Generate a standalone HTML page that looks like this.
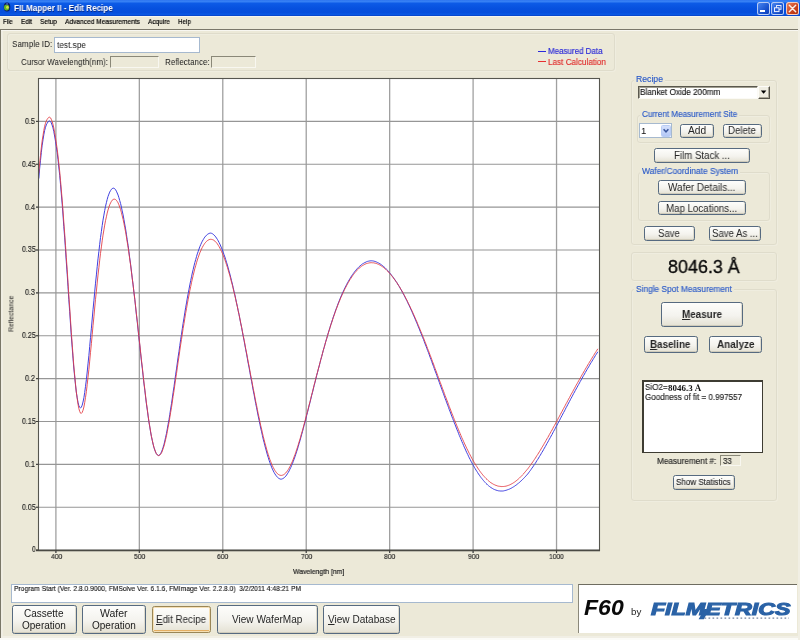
<!DOCTYPE html>
<html><head><meta charset="utf-8"><title>FILMapper II - Edit Recipe</title>
<style>
html,body{margin:0;padding:0;}
html{background:#ece9d8;}
body{filter:blur(0.32px);width:800px;height:640px;overflow:hidden;position:relative;background:#ece9d8;font-family:"Liberation Sans",sans-serif;}
.t{position:absolute;will-change:transform;white-space:nowrap;transform-origin:0 50%;}
.gb{border:1px solid #dfdccb;border-radius:3px;box-sizing:border-box;box-shadow:inset 1px 1px 0 rgba(255,255,255,.18), 1px 1px 0 rgba(255,255,255,.18);}
.btn{box-sizing:border-box;border:1px solid #566a80;border-radius:2.5px;background:linear-gradient(#fdfdfb 0%,#f4f3ee 55%,#e4e1d3 100%);box-shadow:inset 0 -1px 0 #cfcbbb, inset -1px 0 0 #dedbce;}
.tb{box-sizing:border-box;border:1px solid #a6b9cf;background:#fff;}
.sunk{box-sizing:border-box;border:1px solid;border-color:#8a8878 #f8f7f0 #f8f7f0 #8a8878;}
svg{position:absolute;left:0;top:0;}
</style></head><body>
<div class="" style="position:absolute;left:0px;top:0px;width:800px;height:15.6px;background:linear-gradient(#2a72ee 0%,#3a84f6 8%,#0c5ae6 22%,#0650de 55%,#064edc 78%,#0a58e4 90%,#0640c4 100%);"></div>
<div class="" style="position:absolute;left:0px;top:15.6px;width:800px;height:1.4000000000000004px;background:#f6f5ee;"></div>
<svg width="16" height="16" viewBox="0 0 16 16"><ellipse cx="7" cy="7" rx="3.3" ry="4.6" fill="#0c1c64"/><ellipse cx="6.6" cy="7.4" rx="2.6" ry="3.0" fill="#62b42c"/><ellipse cx="7.4" cy="7.3" rx="1.3" ry="1.5" fill="#d6e244"/><ellipse cx="7.1" cy="3.9" rx="1.1" ry="0.9" fill="#3a58c0"/></svg>
<div class="t" style='left:13.80px;top:3.70px;font:bold 8.5px/8.5px "Liberation Sans", sans-serif;color:#fff;transform:scaleX(0.9499);text-shadow:0.5px 0.5px 0 #0a2a80;'>FILMapper II - Edit Recipe</div>
<div class="" style="position:absolute;left:757px;top:2px;width:13px;height:12.6px;background:linear-gradient(135deg,#4a86f0,#1a54d0 60%,#0a3cb8);border:1px solid rgba(225,236,255,.78);border-radius:2.5px;box-sizing:border-box;"></div>
<div class="" style="position:absolute;left:771px;top:2px;width:13px;height:12.6px;background:linear-gradient(135deg,#4a86f0,#1a54d0 60%,#0a3cb8);border:1px solid rgba(225,236,255,.78);border-radius:2.5px;box-sizing:border-box;"></div>
<div class="" style="position:absolute;left:786px;top:2px;width:13px;height:12.6px;background:linear-gradient(135deg,#e8805c,#c8401c 60%,#b03010);border:1px solid rgba(255,236,228,.8);border-radius:2.5px;box-sizing:border-box;"></div>
<svg width="800" height="16" viewBox="0 0 800 16"><rect x="760" y="10" width="5" height="2" fill="#fff"/><rect x="776.5" y="5.5" width="4.5" height="3.8" fill="none" stroke="#dfe9ff" stroke-width="1"/><rect x="774.5" y="7.8" width="4.5" height="3.8" fill="#2a5fd6" stroke="#eef3ff" stroke-width="1"/><path d="M789.3 5.3 L795.7 11.7 M795.7 5.3 L789.3 11.7" stroke="#fbeee8" stroke-width="1.45" stroke-linecap="round"/></svg>
<div class="t" style='left:3.30px;top:17.88px;font:7.7px/7.7px "Liberation Sans", sans-serif;color:#000;transform:scaleX(0.7898);-webkit-text-stroke:0.2px #000;'>File</div>
<div class="t" style='left:20.75px;top:17.88px;font:7.7px/7.7px "Liberation Sans", sans-serif;color:#000;transform:scaleX(0.8290);-webkit-text-stroke:0.2px #000;'>Edit</div>
<div class="t" style='left:40.00px;top:17.88px;font:7.7px/7.7px "Liberation Sans", sans-serif;color:#000;transform:scaleX(0.8448);-webkit-text-stroke:0.2px #000;'>Setup</div>
<div class="t" style='left:65.00px;top:17.88px;font:7.7px/7.7px "Liberation Sans", sans-serif;color:#000;transform:scaleX(0.8590);-webkit-text-stroke:0.2px #000;'>Advanced Measurements</div>
<div class="t" style='left:148.00px;top:17.88px;font:7.7px/7.7px "Liberation Sans", sans-serif;color:#000;transform:scaleX(0.8426);-webkit-text-stroke:0.2px #000;'>Acquire</div>
<div class="t" style='left:178.00px;top:17.88px;font:7.7px/7.7px "Liberation Sans", sans-serif;color:#000;transform:scaleX(0.8209);-webkit-text-stroke:0.2px #000;'>Help</div>
<div class="" style="position:absolute;left:0px;top:29px;width:799px;height:1px;background:#7a776a;"></div>
<div class="" style="position:absolute;left:0px;top:30px;width:799px;height:1px;background:#f8f7f1;"></div>
<div class="" style="position:absolute;left:0px;top:29px;width:1.4px;height:609.2px;background:linear-gradient(90deg,#6a6758,#8a8776);"></div>
<div class="" style="position:absolute;left:1.4px;top:31px;width:1.6px;height:605px;background:#f0eee3;"></div>
<div class="gb" style="position:absolute;left:7px;top:33px;width:608px;height:38px;"></div>
<div class="t" style='left:12.00px;top:39.09px;font:9.7px/9.7px "Liberation Sans", sans-serif;color:#1a1a1a;transform:scaleX(0.8399);'>Sample ID:</div>
<div class="tb" style="position:absolute;left:54px;top:37px;width:146px;height:16px;"></div>
<div class="t" style='left:56.50px;top:39.59px;font:9.7px/9.7px "Liberation Sans", sans-serif;color:#1a1a1a;transform:scaleX(0.8537);'>test.spe</div>
<div class="t" style='left:21.00px;top:56.99px;font:9.7px/9.7px "Liberation Sans", sans-serif;color:#1a1a1a;transform:scaleX(0.8262);'>Cursor Wavelength(nm):</div>
<div class="sunk" style="position:absolute;left:110px;top:56px;width:49px;height:12px;"></div>
<div class="t" style='left:164.50px;top:56.99px;font:9.7px/9.7px "Liberation Sans", sans-serif;color:#1a1a1a;transform:scaleX(0.8309);'>Reflectance:</div>
<div class="sunk" style="position:absolute;left:211px;top:56px;width:45px;height:12px;"></div>
<div class="" style="position:absolute;left:537.5px;top:51px;width:8.5px;height:1px;background:#2a2adc;"></div>
<div class="t" style='left:548.20px;top:47.12px;font:8.6px/8.6px "Liberation Sans", sans-serif;color:#2424d8;transform:scaleX(0.9286);-webkit-text-stroke:0.14px #2424d8;'>Measured Data</div>
<div class="" style="position:absolute;left:537.5px;top:61px;width:8.5px;height:1px;background:#e83030;"></div>
<div class="t" style='left:548.20px;top:57.52px;font:8.6px/8.6px "Liberation Sans", sans-serif;color:#e02a2a;transform:scaleX(0.9478);-webkit-text-stroke:0.14px #e02a2a;'>Last Calculation</div>
<svg width="800" height="640" viewBox="0 0 800 640"><rect x="38.5" y="78.5" width="561.0" height="472.0" fill="#fff"/><line x1="55.9" y1="78.5" x2="55.9" y2="553.0" stroke="#a0a0a0" stroke-width="1.3"/><line x1="139.34" y1="78.5" x2="139.34" y2="553.0" stroke="#a0a0a0" stroke-width="1.3"/><line x1="222.78" y1="78.5" x2="222.78" y2="553.0" stroke="#a0a0a0" stroke-width="1.3"/><line x1="306.22" y1="78.5" x2="306.22" y2="553.0" stroke="#a0a0a0" stroke-width="1.3"/><line x1="389.66" y1="78.5" x2="389.66" y2="553.0" stroke="#a0a0a0" stroke-width="1.3"/><line x1="473.1" y1="78.5" x2="473.1" y2="553.0" stroke="#a0a0a0" stroke-width="1.3"/><line x1="556.54" y1="78.5" x2="556.54" y2="553.0" stroke="#a0a0a0" stroke-width="1.3"/><line x1="36.0" y1="507.23" x2="599.5" y2="507.23" stroke="#969696" stroke-width="1.1"/><line x1="36.0" y1="464.36" x2="599.5" y2="464.36" stroke="#969696" stroke-width="1.1"/><line x1="36.0" y1="421.49" x2="599.5" y2="421.49" stroke="#969696" stroke-width="1.1"/><line x1="36.0" y1="378.62" x2="599.5" y2="378.62" stroke="#969696" stroke-width="1.1"/><line x1="36.0" y1="335.75" x2="599.5" y2="335.75" stroke="#969696" stroke-width="1.1"/><line x1="36.0" y1="292.88" x2="599.5" y2="292.88" stroke="#969696" stroke-width="1.1"/><line x1="36.0" y1="250.01" x2="599.5" y2="250.01" stroke="#969696" stroke-width="1.1"/><line x1="36.0" y1="207.14" x2="599.5" y2="207.14" stroke="#969696" stroke-width="1.1"/><line x1="36.0" y1="164.27" x2="599.5" y2="164.27" stroke="#969696" stroke-width="1.1"/><line x1="36.0" y1="121.4" x2="599.5" y2="121.4" stroke="#969696" stroke-width="1.1"/><path d="M38.8 178.6 L39.6 168.9 L40.5 160.3 L41.3 152.6 L42.1 145.8 L43.0 139.8 L43.8 134.8 L44.6 130.6 L45.5 127.3 L46.3 124.9 L47.1 123.4 L48.0 122.0 L48.8 121.1 L49.6 121.0 L50.5 121.5 L51.3 122.9 L52.1 125.0 L53.0 127.9 L53.8 131.6 L54.6 136.0 L55.5 141.2 L56.3 146.6 L57.2 152.7 L58.0 159.5 L58.8 167.0 L59.7 175.3 L60.5 184.2 L61.3 193.8 L62.2 204.1 L63.0 215.0 L63.8 226.5 L64.7 237.9 L65.5 249.7 L66.3 261.8 L67.2 274.2 L68.0 286.7 L68.8 299.3 L69.7 311.7 L70.5 324.0 L71.3 336.0 L72.2 347.4 L73.0 358.1 L73.8 368.0 L74.7 377.0 L75.5 385.0 L76.3 392.0 L77.2 397.7 L78.0 402.3 L78.8 405.5 L79.7 407.4 L80.5 408.0 L81.3 407.2 L82.2 405.2 L83.0 402.0 L83.9 397.8 L84.7 392.5 L85.5 386.4 L86.4 379.5 L87.2 372.0 L88.0 363.9 L88.9 355.4 L89.7 346.5 L90.5 337.5 L91.4 328.2 L92.2 319.0 L93.0 309.8 L93.9 300.8 L94.7 291.9 L95.5 283.2 L96.4 274.9 L97.2 266.7 L98.0 258.9 L98.9 251.4 L99.7 244.3 L100.5 237.6 L101.4 231.3 L102.2 225.5 L103.0 220.1 L103.9 215.1 L104.7 210.6 L105.5 206.4 L106.4 202.7 L107.2 199.4 L108.0 196.5 L108.9 194.1 L109.7 192.1 L110.6 190.5 L111.4 189.3 L112.2 188.6 L113.1 188.2 L113.9 188.2 L114.7 188.7 L115.6 189.8 L116.4 191.2 L117.2 193.0 L118.1 195.1 L118.9 197.6 L119.7 200.5 L120.6 203.6 L121.4 207.1 L122.2 210.9 L123.1 214.9 L123.9 219.3 L124.7 224.0 L125.6 228.9 L126.4 234.2 L127.2 239.7 L128.1 245.5 L128.9 251.5 L129.7 257.8 L130.6 264.3 L131.4 271.0 L132.2 277.8 L133.1 284.9 L133.9 292.1 L134.8 299.5 L135.6 307.0 L136.4 314.6 L137.3 322.3 L138.1 330.0 L138.9 337.8 L139.8 345.5 L140.6 353.2 L141.4 360.9 L142.3 368.4 L143.1 375.8 L143.9 383.1 L144.8 390.2 L145.6 397.1 L146.4 403.7 L147.3 410.1 L148.1 416.1 L148.9 421.8 L149.8 427.1 L150.6 432.0 L151.4 436.5 L152.3 440.6 L153.1 444.2 L153.9 447.3 L154.8 450.0 L155.6 452.1 L156.4 453.7 L157.3 454.8 L158.1 455.5 L158.9 455.4 L159.8 454.8 L160.6 453.6 L161.5 451.9 L162.3 449.8 L163.1 447.3 L164.0 444.3 L164.8 441.0 L165.6 437.3 L166.5 433.3 L167.3 428.9 L168.1 424.3 L169.0 419.5 L169.8 414.4 L170.6 409.1 L171.5 403.7 L172.3 398.1 L173.1 392.4 L174.0 386.6 L174.8 380.7 L175.6 374.8 L176.5 368.9 L177.3 363.0 L178.1 357.1 L179.0 351.3 L179.8 345.5 L180.6 339.8 L181.5 334.2 L182.3 328.7 L183.1 323.3 L184.0 318.0 L184.8 312.8 L185.6 307.8 L186.5 302.9 L187.3 298.1 L188.2 293.6 L189.0 289.2 L189.8 284.9 L190.7 280.7 L191.5 276.8 L192.3 273.0 L193.2 269.4 L194.0 265.9 L194.8 262.7 L195.7 259.6 L196.5 256.7 L197.3 253.9 L198.2 251.4 L199.0 249.0 L199.8 246.8 L200.7 244.7 L201.5 242.9 L202.3 241.2 L203.2 239.7 L204.0 238.3 L204.8 237.1 L205.7 236.1 L206.5 235.2 L207.3 234.5 L208.2 233.9 L209.0 233.5 L209.8 233.2 L210.7 233.1 L211.5 233.3 L212.4 233.7 L213.2 234.3 L214.0 235.0 L214.9 235.9 L215.7 236.9 L216.5 238.1 L217.4 239.4 L218.2 240.8 L219.0 242.4 L219.9 244.1 L220.7 246.0 L221.5 247.9 L222.4 250.0 L223.2 252.2 L224.0 254.6 L224.9 257.0 L225.7 259.6 L226.5 262.2 L227.4 265.0 L228.2 268.0 L229.0 271.0 L229.9 274.1 L230.7 277.3 L231.5 280.7 L232.4 284.1 L233.2 287.7 L234.0 291.3 L234.9 295.0 L235.7 298.8 L236.5 302.7 L237.4 306.7 L238.2 310.7 L239.1 314.8 L239.9 319.0 L240.7 323.2 L241.6 327.5 L242.4 331.8 L243.2 336.2 L244.1 340.7 L244.9 345.1 L245.7 349.6 L246.6 354.1 L247.4 358.7 L248.2 363.2 L249.1 367.7 L249.9 372.3 L250.7 376.8 L251.6 381.3 L252.4 385.8 L253.2 390.3 L254.1 394.7 L254.9 399.1 L255.7 403.5 L256.6 407.8 L257.4 412.0 L258.2 416.1 L259.1 420.2 L259.9 424.2 L260.7 428.0 L261.6 431.8 L262.4 435.5 L263.2 439.1 L264.1 442.5 L264.9 445.8 L265.8 449.0 L266.6 452.0 L267.4 454.9 L268.3 457.7 L269.1 460.3 L269.9 462.7 L270.8 465.0 L271.6 467.1 L272.4 469.1 L273.3 470.9 L274.1 472.5 L274.9 473.9 L275.8 475.2 L276.6 476.3 L277.4 477.2 L278.3 478.0 L279.1 478.5 L279.9 478.9 L280.8 479.2 L281.6 479.1 L282.4 478.8 L283.3 478.4 L284.1 477.8 L284.9 477.0 L285.8 476.1 L286.6 475.0 L287.4 473.8 L288.3 472.4 L289.1 470.9 L289.9 469.2 L290.8 467.4 L291.6 465.5 L292.5 463.5 L293.3 461.3 L294.1 459.1 L295.0 456.7 L295.8 454.2 L296.6 451.7 L297.5 449.0 L298.3 446.3 L299.1 443.5 L300.0 440.6 L300.8 437.7 L301.6 434.7 L302.5 431.6 L303.3 428.5 L304.1 425.4 L305.0 422.2 L305.8 419.0 L306.6 415.7 L307.5 412.4 L308.3 409.1 L309.1 405.8 L310.0 402.4 L310.8 399.1 L311.6 395.7 L312.5 392.4 L313.3 389.0 L314.1 385.7 L315.0 382.3 L315.8 379.0 L316.6 375.7 L317.5 372.4 L318.3 369.2 L319.2 366.0 L320.0 362.8 L320.8 359.6 L321.7 356.5 L322.5 353.4 L323.3 350.3 L324.2 347.3 L325.0 344.3 L325.8 341.3 L326.7 338.5 L327.5 335.6 L328.3 332.8 L329.2 330.0 L330.0 327.3 L330.8 324.7 L331.7 322.1 L332.5 319.5 L333.3 317.0 L334.2 314.5 L335.0 312.2 L335.8 309.8 L336.7 307.5 L337.5 305.3 L338.3 303.1 L339.2 301.0 L340.0 298.9 L340.8 296.9 L341.7 294.9 L342.5 293.0 L343.4 291.2 L344.2 289.4 L345.0 287.7 L345.9 286.0 L346.7 284.4 L347.5 282.8 L348.4 281.3 L349.2 279.9 L350.0 278.5 L350.9 277.1 L351.7 275.8 L352.5 274.6 L353.4 273.4 L354.2 272.3 L355.0 271.2 L355.9 270.2 L356.7 269.2 L357.5 268.3 L358.4 267.4 L359.2 266.6 L360.0 265.9 L360.9 265.2 L361.7 264.5 L362.5 263.9 L363.4 263.4 L364.2 262.9 L365.0 262.5 L365.9 262.1 L366.7 261.7 L367.5 261.4 L368.4 261.2 L369.2 261.0 L370.1 260.9 L370.9 260.8 L371.7 260.8 L372.6 260.9 L373.4 261.0 L374.2 261.2 L375.1 261.5 L375.9 261.7 L376.7 262.1 L377.6 262.5 L378.4 262.9 L379.2 263.3 L380.1 263.9 L380.9 264.4 L381.7 265.0 L382.6 265.6 L383.4 266.3 L384.2 267.1 L385.1 267.8 L385.9 268.6 L386.7 269.5 L387.6 270.4 L388.4 271.3 L389.2 272.3 L390.1 273.3 L390.9 274.3 L391.7 275.4 L392.6 276.5 L393.4 277.6 L394.2 278.8 L395.1 280.0 L395.9 281.3 L396.8 282.5 L397.6 283.9 L398.4 285.2 L399.3 286.6 L400.1 288.0 L400.9 289.5 L401.8 291.0 L402.6 292.5 L403.4 294.1 L404.3 295.7 L405.1 297.3 L405.9 298.9 L406.8 300.6 L407.6 302.3 L408.4 304.1 L409.3 305.8 L410.1 307.6 L410.9 309.4 L411.8 311.3 L412.6 313.2 L413.4 315.1 L414.3 317.0 L415.1 318.9 L415.9 320.9 L416.8 322.9 L417.6 324.9 L418.4 326.9 L419.3 329.0 L420.1 331.1 L420.9 333.1 L421.8 335.3 L422.6 337.4 L423.5 339.5 L424.3 341.7 L425.1 343.9 L426.0 346.1 L426.8 348.3 L427.6 350.5 L428.5 352.7 L429.3 354.9 L430.1 357.2 L431.0 359.5 L431.8 361.7 L432.6 364.0 L433.5 366.3 L434.3 368.6 L435.1 370.9 L436.0 373.2 L436.8 375.5 L437.6 377.8 L438.5 380.1 L439.3 382.4 L440.1 384.7 L441.0 387.0 L441.8 389.3 L442.6 391.6 L443.5 393.8 L444.3 396.1 L445.1 398.4 L446.0 400.7 L446.8 402.9 L447.7 405.2 L448.5 407.4 L449.3 409.7 L450.2 411.9 L451.0 414.1 L451.8 416.3 L452.7 418.5 L453.5 420.6 L454.3 422.8 L455.2 424.9 L456.0 427.0 L456.8 429.1 L457.7 431.2 L458.5 433.3 L459.3 435.4 L460.2 437.4 L461.0 439.4 L461.8 441.4 L462.7 443.3 L463.5 445.3 L464.3 447.2 L465.2 449.0 L466.0 450.9 L466.8 452.7 L467.7 454.4 L468.5 456.2 L469.3 457.9 L470.2 459.5 L471.0 461.2 L471.8 462.8 L472.7 464.3 L473.5 465.8 L474.4 467.3 L475.2 468.7 L476.0 470.1 L476.9 471.4 L477.7 472.7 L478.5 474.0 L479.4 475.2 L480.2 476.4 L481.0 477.5 L481.9 478.6 L482.7 479.6 L483.5 480.6 L484.4 481.6 L485.2 482.5 L486.0 483.4 L486.9 484.2 L487.7 485.0 L488.5 485.7 L489.4 486.4 L490.2 487.0 L491.0 487.6 L491.9 488.1 L492.7 488.6 L493.5 489.1 L494.4 489.5 L495.2 489.8 L496.0 490.1 L496.9 490.4 L497.7 490.6 L498.5 490.8 L499.4 490.9 L500.2 491.0 L501.1 491.0 L501.9 491.0 L502.7 491.0 L503.6 490.9 L504.4 490.7 L505.2 490.5 L506.1 490.3 L506.9 490.0 L507.7 489.7 L508.6 489.4 L509.4 489.1 L510.2 488.7 L511.1 488.3 L511.9 487.8 L512.7 487.3 L513.6 486.8 L514.4 486.3 L515.2 485.7 L516.1 485.1 L516.9 484.5 L517.7 483.8 L518.6 483.2 L519.4 482.4 L520.2 481.7 L521.1 480.9 L521.9 480.2 L522.7 479.3 L523.6 478.5 L524.4 477.6 L525.2 476.8 L526.1 475.8 L526.9 474.9 L527.8 473.9 L528.6 472.8 L529.4 471.7 L530.3 470.6 L531.1 469.4 L531.9 468.2 L532.8 467.0 L533.6 465.8 L534.4 464.5 L535.3 463.3 L536.1 462.0 L536.9 460.6 L537.8 459.3 L538.6 458.0 L539.4 456.6 L540.3 455.2 L541.1 453.8 L541.9 452.4 L542.8 451.0 L543.6 449.5 L544.4 448.1 L545.3 446.6 L546.1 445.1 L546.9 443.6 L547.8 442.1 L548.6 440.6 L549.4 439.1 L550.3 437.6 L551.1 436.0 L552.0 434.5 L552.8 432.9 L553.6 431.4 L554.5 429.8 L555.3 428.3 L556.1 426.7 L557.0 425.1 L557.8 423.5 L558.6 422.0 L559.5 420.4 L560.3 418.8 L561.1 417.2 L562.0 415.6 L562.8 414.0 L563.6 412.5 L564.5 410.9 L565.3 409.3 L566.1 407.7 L567.0 406.1 L567.8 404.5 L568.6 403.0 L569.5 401.4 L570.3 399.8 L571.1 398.3 L572.0 396.7 L572.8 395.1 L573.6 393.6 L574.5 392.0 L575.3 390.5 L576.1 389.0 L577.0 387.4 L577.8 385.9 L578.7 384.4 L579.5 382.9 L580.3 381.4 L581.2 379.9 L582.0 378.4 L582.8 376.9 L583.7 375.4 L584.5 374.0 L585.3 372.5 L586.2 371.0 L587.0 369.6 L587.8 368.2 L588.7 366.8 L589.5 365.3 L590.3 363.9 L591.2 362.5 L592.0 361.2 L592.8 359.8 L593.7 358.4 L594.5 357.1 L595.3 355.7 L596.2 354.4 L597.0 353.1 L597.8 351.8" fill="none" stroke="#4040e0" stroke-width="1"/><path d="M38.8 173.2 L39.6 163.7 L40.5 155.4 L41.3 147.9 L42.1 141.2 L43.0 135.4 L43.8 130.5 L44.6 126.4 L45.5 123.2 L46.3 120.9 L47.1 119.4 L48.0 118.2 L48.8 117.3 L49.6 117.2 L50.5 117.8 L51.3 119.3 L52.1 121.4 L53.0 124.4 L53.8 128.0 L54.6 132.5 L55.5 137.7 L56.3 143.2 L57.2 149.2 L58.0 156.0 L58.8 163.4 L59.7 171.5 L60.5 180.4 L61.3 189.9 L62.2 200.1 L63.0 210.8 L63.8 222.1 L64.7 233.7 L65.5 245.4 L66.3 257.5 L67.2 269.8 L68.0 282.4 L68.8 295.0 L69.7 307.6 L70.5 320.1 L71.3 332.3 L72.2 344.1 L73.0 355.3 L73.8 365.8 L74.7 375.4 L75.5 384.2 L76.3 392.0 L77.2 398.6 L78.0 404.1 L78.8 408.4 L79.7 411.4 L80.5 413.1 L81.3 413.4 L82.2 412.4 L83.0 410.3 L83.9 407.0 L84.7 402.7 L85.5 397.5 L86.4 391.4 L87.2 384.6 L88.0 377.3 L88.9 369.4 L89.7 361.1 L90.5 352.4 L91.4 343.6 L92.2 334.7 L93.0 325.7 L93.9 316.8 L94.7 308.0 L95.5 299.4 L96.4 291.1 L97.2 283.0 L98.0 275.1 L98.9 267.5 L99.7 260.2 L100.5 253.4 L101.4 246.9 L102.2 240.8 L103.0 235.2 L103.9 229.9 L104.7 225.1 L105.5 220.7 L106.4 216.8 L107.2 213.1 L108.0 210.0 L108.9 207.2 L109.7 204.8 L110.6 202.9 L111.4 201.4 L112.2 200.2 L113.1 199.5 L113.9 199.2 L114.7 199.2 L115.6 199.6 L116.4 200.3 L117.2 201.4 L118.1 202.9 L118.9 204.8 L119.7 207.0 L120.6 209.6 L121.4 212.5 L122.2 215.8 L123.1 219.4 L123.9 223.2 L124.7 227.4 L125.6 231.9 L126.4 236.8 L127.2 241.9 L128.1 247.3 L128.9 253.0 L129.7 258.9 L130.6 265.1 L131.4 271.5 L132.2 278.1 L133.1 284.9 L133.9 291.9 L134.8 299.1 L135.6 306.4 L136.4 313.8 L137.3 321.4 L138.1 329.0 L138.9 336.7 L139.8 344.4 L140.6 352.1 L141.4 359.7 L142.3 367.2 L143.1 374.7 L143.9 382.0 L144.8 389.2 L145.6 396.1 L146.4 402.8 L147.3 409.2 L148.1 415.4 L148.9 421.2 L149.8 426.6 L150.6 431.6 L151.4 436.2 L152.3 440.3 L153.1 444.0 L153.9 447.2 L154.8 449.9 L155.6 452.1 L156.4 453.8 L157.3 454.9 L158.1 455.5 L158.9 455.6 L159.8 455.1 L160.6 454.2 L161.5 452.9 L162.3 451.0 L163.1 448.7 L164.0 446.0 L164.8 442.9 L165.6 439.5 L166.5 435.7 L167.3 431.6 L168.1 427.2 L169.0 422.5 L169.8 417.7 L170.6 412.6 L171.5 407.4 L172.3 402.0 L173.1 396.4 L174.0 390.8 L174.8 385.1 L175.6 379.3 L176.5 373.6 L177.3 367.8 L178.1 362.0 L179.0 356.3 L179.8 350.6 L180.6 345.0 L181.5 339.5 L182.3 334.0 L183.1 328.7 L184.0 323.5 L184.8 318.4 L185.6 313.4 L186.5 308.6 L187.3 303.9 L188.2 299.3 L189.0 295.0 L189.8 290.7 L190.7 286.6 L191.5 282.7 L192.3 279.0 L193.2 275.4 L194.0 272.0 L194.8 268.7 L195.7 265.7 L196.5 262.8 L197.3 260.0 L198.2 257.5 L199.0 255.1 L199.8 252.9 L200.7 250.9 L201.5 249.0 L202.3 247.4 L203.2 245.8 L204.0 244.5 L204.8 243.3 L205.7 242.3 L206.5 241.4 L207.3 240.7 L208.2 240.1 L209.0 239.7 L209.8 239.4 L210.7 239.3 L211.5 239.4 L212.4 239.6 L213.2 239.9 L214.0 240.4 L214.9 241.1 L215.7 241.9 L216.5 242.8 L217.4 243.9 L218.2 245.2 L219.0 246.5 L219.9 248.1 L220.7 249.7 L221.5 251.5 L222.4 253.4 L223.2 255.4 L224.0 257.5 L224.9 259.8 L225.7 262.2 L226.5 264.7 L227.4 267.3 L228.2 270.0 L229.0 272.9 L229.9 275.8 L230.7 278.9 L231.5 282.1 L232.4 285.3 L233.2 288.7 L234.0 292.2 L234.9 295.7 L235.7 299.4 L236.5 303.1 L237.4 306.9 L238.2 310.8 L239.1 314.8 L239.9 318.8 L240.7 322.9 L241.6 327.1 L242.4 331.3 L243.2 335.6 L244.1 339.9 L244.9 344.2 L245.7 348.6 L246.6 353.0 L247.4 357.4 L248.2 361.9 L249.1 366.3 L249.9 370.7 L250.7 375.2 L251.6 379.6 L252.4 384.0 L253.2 388.4 L254.1 392.7 L254.9 397.1 L255.7 401.3 L256.6 405.5 L257.4 409.7 L258.2 413.7 L259.1 417.7 L259.9 421.7 L260.7 425.5 L261.6 429.2 L262.4 432.8 L263.2 436.3 L264.1 439.7 L264.9 443.0 L265.8 446.1 L266.6 449.1 L267.4 451.9 L268.3 454.6 L269.1 457.2 L269.9 459.6 L270.8 461.8 L271.6 463.9 L272.4 465.8 L273.3 467.5 L274.1 469.1 L274.9 470.5 L275.8 471.7 L276.6 472.8 L277.4 473.7 L278.3 474.4 L279.1 474.9 L279.9 475.2 L280.8 475.4 L281.6 475.4 L282.4 475.2 L283.3 474.9 L284.1 474.4 L284.9 473.7 L285.8 472.9 L286.6 472.0 L287.4 470.8 L288.3 469.5 L289.1 468.1 L289.9 466.6 L290.8 464.9 L291.6 463.1 L292.5 461.1 L293.3 459.1 L294.1 456.9 L295.0 454.6 L295.8 452.3 L296.6 449.8 L297.5 447.2 L298.3 444.6 L299.1 441.9 L300.0 439.1 L300.8 436.2 L301.6 433.3 L302.5 430.3 L303.3 427.3 L304.1 424.2 L305.0 421.1 L305.8 417.9 L306.6 414.7 L307.5 411.5 L308.3 408.2 L309.1 405.0 L310.0 401.7 L310.8 398.4 L311.6 395.1 L312.5 391.8 L313.3 388.5 L314.1 385.2 L315.0 381.9 L315.8 378.6 L316.6 375.4 L317.5 372.2 L318.3 369.0 L319.2 365.8 L320.0 362.6 L320.8 359.5 L321.7 356.4 L322.5 353.3 L323.3 350.3 L324.2 347.3 L325.0 344.4 L325.8 341.5 L326.7 338.6 L327.5 335.8 L328.3 333.1 L329.2 330.3 L330.0 327.7 L330.8 325.0 L331.7 322.5 L332.5 320.0 L333.3 317.5 L334.2 315.1 L335.0 312.7 L335.8 310.4 L336.7 308.1 L337.5 305.9 L338.3 303.8 L339.2 301.7 L340.0 299.7 L340.8 297.7 L341.7 295.8 L342.5 293.9 L343.4 292.1 L344.2 290.4 L345.0 288.7 L345.9 287.0 L346.7 285.4 L347.5 283.9 L348.4 282.4 L349.2 281.0 L350.0 279.6 L350.9 278.3 L351.7 277.0 L352.5 275.8 L353.4 274.7 L354.2 273.6 L355.0 272.5 L355.9 271.6 L356.7 270.6 L357.5 269.7 L358.4 268.9 L359.2 268.1 L360.0 267.4 L360.9 266.8 L361.7 266.1 L362.5 265.6 L363.4 265.1 L364.2 264.6 L365.0 264.2 L365.9 263.8 L366.7 263.5 L367.5 263.3 L368.4 263.1 L369.2 262.9 L370.1 262.8 L370.9 262.7 L371.7 262.7 L372.6 262.8 L373.4 262.8 L374.2 263.0 L375.1 263.1 L375.9 263.4 L376.7 263.6 L377.6 264.0 L378.4 264.3 L379.2 264.7 L380.1 265.2 L380.9 265.7 L381.7 266.2 L382.6 266.8 L383.4 267.4 L384.2 268.1 L385.1 268.8 L385.9 269.5 L386.7 270.3 L387.6 271.1 L388.4 272.0 L389.2 272.9 L390.1 273.8 L390.9 274.8 L391.7 275.8 L392.6 276.9 L393.4 277.9 L394.2 279.1 L395.1 280.2 L395.9 281.4 L396.8 282.6 L397.6 283.9 L398.4 285.2 L399.3 286.5 L400.1 287.9 L400.9 289.3 L401.8 290.7 L402.6 292.2 L403.4 293.7 L404.3 295.2 L405.1 296.8 L405.9 298.4 L406.8 300.0 L407.6 301.7 L408.4 303.4 L409.3 305.1 L410.1 306.8 L410.9 308.6 L411.8 310.4 L412.6 312.2 L413.4 314.0 L414.3 315.9 L415.1 317.8 L415.9 319.7 L416.8 321.6 L417.6 323.6 L418.4 325.6 L419.3 327.6 L420.1 329.6 L420.9 331.6 L421.8 333.7 L422.6 335.8 L423.5 337.9 L424.3 340.0 L425.1 342.1 L426.0 344.2 L426.8 346.4 L427.6 348.6 L428.5 350.7 L429.3 352.9 L430.1 355.1 L431.0 357.3 L431.8 359.6 L432.6 361.8 L433.5 364.0 L434.3 366.3 L435.1 368.5 L436.0 370.8 L436.8 373.0 L437.6 375.3 L438.5 377.5 L439.3 379.8 L440.1 382.1 L441.0 384.3 L441.8 386.6 L442.6 388.8 L443.5 391.1 L444.3 393.3 L445.1 395.6 L446.0 397.8 L446.8 400.0 L447.7 402.2 L448.5 404.4 L449.3 406.6 L450.2 408.8 L451.0 411.0 L451.8 413.1 L452.7 415.3 L453.5 417.4 L454.3 419.5 L455.2 421.6 L456.0 423.7 L456.8 425.7 L457.7 427.8 L458.5 429.8 L459.3 431.7 L460.2 433.7 L461.0 435.7 L461.8 437.6 L462.7 439.5 L463.5 441.3 L464.3 443.1 L465.2 445.0 L466.0 446.7 L466.8 448.5 L467.7 450.2 L468.5 451.9 L469.3 453.5 L470.2 455.1 L471.0 456.7 L471.8 458.3 L472.7 459.8 L473.5 461.2 L474.4 462.7 L475.2 464.1 L476.0 465.4 L476.9 466.7 L477.7 468.0 L478.5 469.2 L479.4 470.4 L480.2 471.6 L481.0 472.7 L481.9 473.8 L482.7 474.8 L483.5 475.8 L484.4 476.7 L485.2 477.6 L486.0 478.5 L486.9 479.3 L487.7 480.1 L488.5 480.8 L489.4 481.5 L490.2 482.2 L491.0 482.8 L491.9 483.3 L492.7 483.8 L493.5 484.3 L494.4 484.7 L495.2 485.1 L496.0 485.4 L496.9 485.7 L497.7 486.0 L498.5 486.2 L499.4 486.3 L500.2 486.4 L501.1 486.5 L501.9 486.6 L502.7 486.5 L503.6 486.5 L504.4 486.4 L505.2 486.3 L506.1 486.1 L506.9 485.9 L507.7 485.6 L508.6 485.3 L509.4 485.0 L510.2 484.6 L511.1 484.2 L511.9 483.7 L512.7 483.3 L513.6 482.7 L514.4 482.2 L515.2 481.6 L516.1 480.9 L516.9 480.3 L517.7 479.6 L518.6 478.8 L519.4 478.1 L520.2 477.3 L521.1 476.4 L521.9 475.6 L522.7 474.7 L523.6 473.8 L524.4 472.8 L525.2 471.8 L526.1 470.8 L526.9 469.8 L527.8 468.8 L528.6 467.7 L529.4 466.6 L530.3 465.4 L531.1 464.3 L531.9 463.1 L532.8 461.9 L533.6 460.7 L534.4 459.5 L535.3 458.2 L536.1 456.9 L536.9 455.6 L537.8 454.3 L538.6 453.0 L539.4 451.7 L540.3 450.3 L541.1 448.9 L541.9 447.5 L542.8 446.1 L543.6 444.7 L544.4 443.3 L545.3 441.8 L546.1 440.4 L546.9 438.9 L547.8 437.5 L548.6 436.0 L549.4 434.5 L550.3 433.0 L551.1 431.5 L552.0 430.0 L552.8 428.5 L553.6 426.9 L554.5 425.4 L555.3 423.9 L556.1 422.3 L557.0 420.8 L557.8 419.3 L558.6 417.7 L559.5 416.2 L560.3 414.6 L561.1 413.0 L562.0 411.5 L562.8 409.9 L563.6 408.4 L564.5 406.8 L565.3 405.3 L566.1 403.7 L567.0 402.2 L567.8 400.6 L568.6 399.1 L569.5 397.5 L570.3 396.0 L571.1 394.4 L572.0 392.9 L572.8 391.4 L573.6 389.9 L574.5 388.3 L575.3 386.8 L576.1 385.3 L577.0 383.8 L577.8 382.3 L578.7 380.8 L579.5 379.3 L580.3 377.9 L581.2 376.4 L582.0 374.9 L582.8 373.5 L583.7 372.0 L584.5 370.6 L585.3 369.2 L586.2 367.7 L587.0 366.3 L587.8 364.9 L588.7 363.5 L589.5 362.1 L590.3 360.8 L591.2 359.4 L592.0 358.1 L592.8 356.7 L593.7 355.4 L594.5 354.0 L595.3 352.7 L596.2 351.4 L597.0 350.1 L597.8 348.8" fill="none" stroke="#e23c44" stroke-width="1" stroke-opacity="0.88"/><rect x="38.5" y="78.5" width="561.0" height="472.0" fill="none" stroke="#56564f" stroke-width="1.1"/><line x1="36.0" y1="550.3" x2="600.0" y2="550.3" stroke="#4a4a44" stroke-width="1.7"/><line x1="36.0" y1="550.1" x2="38.5" y2="550.1" stroke="#3c3c38" stroke-width="1"/><line x1="36.0" y1="507.23" x2="38.5" y2="507.23" stroke="#3c3c38" stroke-width="1"/><line x1="36.0" y1="464.36" x2="38.5" y2="464.36" stroke="#3c3c38" stroke-width="1"/><line x1="36.0" y1="421.49" x2="38.5" y2="421.49" stroke="#3c3c38" stroke-width="1"/><line x1="36.0" y1="378.62" x2="38.5" y2="378.62" stroke="#3c3c38" stroke-width="1"/><line x1="36.0" y1="335.75" x2="38.5" y2="335.75" stroke="#3c3c38" stroke-width="1"/><line x1="36.0" y1="292.88" x2="38.5" y2="292.88" stroke="#3c3c38" stroke-width="1"/><line x1="36.0" y1="250.01" x2="38.5" y2="250.01" stroke="#3c3c38" stroke-width="1"/><line x1="36.0" y1="207.14" x2="38.5" y2="207.14" stroke="#3c3c38" stroke-width="1"/><line x1="36.0" y1="164.27" x2="38.5" y2="164.27" stroke="#3c3c38" stroke-width="1"/><line x1="36.0" y1="121.4" x2="38.5" y2="121.4" stroke="#3c3c38" stroke-width="1"/><line x1="55.9" y1="550.5" x2="55.9" y2="553.0" stroke="#3c3c38" stroke-width="1"/><line x1="139.34" y1="550.5" x2="139.34" y2="553.0" stroke="#3c3c38" stroke-width="1"/><line x1="222.78" y1="550.5" x2="222.78" y2="553.0" stroke="#3c3c38" stroke-width="1"/><line x1="306.22" y1="550.5" x2="306.22" y2="553.0" stroke="#3c3c38" stroke-width="1"/><line x1="389.66" y1="550.5" x2="389.66" y2="553.0" stroke="#3c3c38" stroke-width="1"/><line x1="473.1" y1="550.5" x2="473.1" y2="553.0" stroke="#3c3c38" stroke-width="1"/><line x1="556.54" y1="550.5" x2="556.54" y2="553.0" stroke="#3c3c38" stroke-width="1"/></svg>
<div class="t" style='left:31.70px;top:546.46px;font:8.2px/8.2px "Liberation Sans", sans-serif;color:#222;transform:scaleX(0.8113);-webkit-text-stroke:0.14px #222;'>0</div>
<div class="t" style='left:21.70px;top:503.59px;font:8.2px/8.2px "Liberation Sans", sans-serif;color:#222;transform:scaleX(0.8584);-webkit-text-stroke:0.14px #222;'>0.05</div>
<div class="t" style='left:25.40px;top:460.72px;font:8.2px/8.2px "Liberation Sans", sans-serif;color:#222;transform:scaleX(0.8772);-webkit-text-stroke:0.14px #222;'>0.1</div>
<div class="t" style='left:21.70px;top:417.85px;font:8.2px/8.2px "Liberation Sans", sans-serif;color:#222;transform:scaleX(0.8584);-webkit-text-stroke:0.14px #222;'>0.15</div>
<div class="t" style='left:25.40px;top:374.98px;font:8.2px/8.2px "Liberation Sans", sans-serif;color:#222;transform:scaleX(0.8772);-webkit-text-stroke:0.14px #222;'>0.2</div>
<div class="t" style='left:21.70px;top:332.11px;font:8.2px/8.2px "Liberation Sans", sans-serif;color:#222;transform:scaleX(0.8584);-webkit-text-stroke:0.14px #222;'>0.25</div>
<div class="t" style='left:25.40px;top:289.24px;font:8.2px/8.2px "Liberation Sans", sans-serif;color:#222;transform:scaleX(0.8772);-webkit-text-stroke:0.14px #222;'>0.3</div>
<div class="t" style='left:21.70px;top:246.37px;font:8.2px/8.2px "Liberation Sans", sans-serif;color:#222;transform:scaleX(0.8584);-webkit-text-stroke:0.14px #222;'>0.35</div>
<div class="t" style='left:25.40px;top:203.50px;font:8.2px/8.2px "Liberation Sans", sans-serif;color:#222;transform:scaleX(0.8772);-webkit-text-stroke:0.14px #222;'>0.4</div>
<div class="t" style='left:21.70px;top:160.63px;font:8.2px/8.2px "Liberation Sans", sans-serif;color:#222;transform:scaleX(0.8584);-webkit-text-stroke:0.14px #222;'>0.45</div>
<div class="t" style='left:25.40px;top:117.76px;font:8.2px/8.2px "Liberation Sans", sans-serif;color:#222;transform:scaleX(0.8772);-webkit-text-stroke:0.14px #222;'>0.5</div>
<div class="t" style='left:50.60px;top:553.03px;font:8.0px/8.0px "Liberation Sans", sans-serif;color:#222;transform:scaleX(0.8391);-webkit-text-stroke:0.14px #222;'>400</div>
<div class="t" style='left:134.04px;top:553.03px;font:8.0px/8.0px "Liberation Sans", sans-serif;color:#222;transform:scaleX(0.8391);-webkit-text-stroke:0.14px #222;'>500</div>
<div class="t" style='left:217.48px;top:553.03px;font:8.0px/8.0px "Liberation Sans", sans-serif;color:#222;transform:scaleX(0.8391);-webkit-text-stroke:0.14px #222;'>600</div>
<div class="t" style='left:300.92px;top:553.03px;font:8.0px/8.0px "Liberation Sans", sans-serif;color:#222;transform:scaleX(0.8391);-webkit-text-stroke:0.14px #222;'>700</div>
<div class="t" style='left:384.36px;top:553.03px;font:8.0px/8.0px "Liberation Sans", sans-serif;color:#222;transform:scaleX(0.8391);-webkit-text-stroke:0.14px #222;'>800</div>
<div class="t" style='left:467.80px;top:553.03px;font:8.0px/8.0px "Liberation Sans", sans-serif;color:#222;transform:scaleX(0.8391);-webkit-text-stroke:0.14px #222;'>900</div>
<div class="t" style='left:549.44px;top:553.03px;font:8.0px/8.0px "Liberation Sans", sans-serif;color:#222;transform:scaleX(0.8316);-webkit-text-stroke:0.14px #222;'>1000</div>
<div class="t" style='left:293.00px;top:568.18px;font:7.7px/7.7px "Liberation Sans", sans-serif;color:#222;transform:scaleX(0.8940);-webkit-text-stroke:0.2px #222;'>Wavelength [nm]</div>
<div class="t" style='left:13.6px;top:331.9px;font:7.5px/7.5px "Liberation Sans",sans-serif;color:#222;transform-origin:0 0;transform:rotate(-90deg) scaleX(0.9165) translateY(-6.6px);'>Reflectance</div>
<div class="gb" style="position:absolute;left:630.5px;top:80px;width:146.0px;height:165px;"></div>
<div class="" style="position:absolute;left:634px;top:74px;width:31px;height:10px;background:#ece9d8;"></div>
<div class="t" style='left:636.00px;top:74.52px;font:8.6px/8.6px "Liberation Sans", sans-serif;color:#2858c8;transform:scaleX(1.0086);-webkit-text-stroke:0.14px #2858c8;'>Recipe</div>
<div class="" style="position:absolute;left:638px;top:86px;width:120px;height:12.599999999999994px;background:#fff;box-sizing:border-box;border:1px solid;border-color:#5a584e #fbfaf5 #fbfaf5 #5a584e;box-shadow:inset 1px 1px 0 #a09e90;"></div>
<div class="" style="position:absolute;left:758.3px;top:86.2px;width:11.700000000000045px;height:12.399999999999991px;background:#efede2;box-sizing:border-box;border:1px solid;border-color:#fdfcf8 #55534a #55534a #fdfcf8;box-shadow:inset -1px -1px 0 #aaa798;"></div>
<svg width="800" height="640"><path d="M760.8 90.6 L766.4 90.6 L763.6 93.8 Z" fill="#000"/></svg>
<div class="t" style='left:639.60px;top:87.74px;font:8.7px/8.7px "Liberation Sans", sans-serif;color:#111;transform:scaleX(0.9393);-webkit-text-stroke:0.14px #111;'>Blanket Oxide 200mm</div>
<div class="gb" style="position:absolute;left:636.5px;top:114.5px;width:133.5px;height:28.5px;"></div>
<div class="" style="position:absolute;left:640px;top:110px;width:99px;height:10px;background:#ece9d8;"></div>
<div class="t" style='left:642.00px;top:110.42px;font:8.6px/8.6px "Liberation Sans", sans-serif;color:#2858c8;transform:scaleX(0.9449);-webkit-text-stroke:0.14px #2858c8;'>Current Measurement Site</div>
<div class="tb" style="position:absolute;left:639px;top:123px;width:33px;height:15px;"></div>
<div class="" style="position:absolute;left:661px;top:124.5px;width:10px;height:12.5px;background:linear-gradient(#d4e0fc,#b4c8f6);border-radius:1.5px;box-sizing:border-box;border:1px solid #b8ccf4;"></div>
<svg width="800" height="640"><path d="M663.6 129.2 L666 131.8 L668.4 129.2" fill="none" stroke="#3a569c" stroke-width="1.5"/></svg>
<div class="t" style='left:641.30px;top:126.07px;font:9.6px/9.6px "Liberation Sans", sans-serif;color:#111;transform:scaleX(0.9926);'>1</div>
<div class="btn" style="position:absolute;left:680px;top:124px;width:34px;height:13.5px;"></div>
<div class="t" style='left:688.40px;top:125.84px;font:10px/10px "Liberation Sans", sans-serif;color:#262626;transform:scaleX(1.0172);'>Add</div>
<div class="btn" style="position:absolute;left:723px;top:124px;width:38.5px;height:13.5px;"></div>
<div class="t" style='left:728.40px;top:125.84px;font:10px/10px "Liberation Sans", sans-serif;color:#262626;transform:scaleX(0.9686);'>Delete</div>
<div class="btn" style="position:absolute;left:653.5px;top:148px;width:96.0px;height:14.5px;"></div>
<div class="t" style='left:673.50px;top:151.44px;font:10px/10px "Liberation Sans", sans-serif;color:#262626;transform:scaleX(0.9674);'>Film Stack ...</div>
<div class="gb" style="position:absolute;left:638px;top:171.5px;width:132px;height:49.5px;"></div>
<div class="" style="position:absolute;left:640px;top:167px;width:100px;height:10px;background:#ece9d8;"></div>
<div class="t" style='left:642.30px;top:166.82px;font:8.6px/8.6px "Liberation Sans", sans-serif;color:#2858c8;transform:scaleX(0.9792);-webkit-text-stroke:0.14px #2858c8;'>Wafer/Coordinate System</div>
<div class="btn" style="position:absolute;left:658px;top:180px;width:88px;height:14.5px;"></div>
<div class="t" style='left:668.40px;top:183.34px;font:10px/10px "Liberation Sans", sans-serif;color:#262626;transform:scaleX(0.9915);'>Wafer Details...</div>
<div class="btn" style="position:absolute;left:658px;top:200.5px;width:88px;height:14.5px;"></div>
<div class="t" style='left:666.30px;top:204.13px;font:10px/10px "Liberation Sans", sans-serif;color:#262626;transform:scaleX(0.9704);'>Map Locations...</div>
<div class="btn" style="position:absolute;left:644px;top:226px;width:51px;height:14.5px;"></div>
<div class="t" style='left:658.20px;top:229.34px;font:10px/10px "Liberation Sans", sans-serif;color:#262626;transform:scaleX(0.9564);'>Save</div>
<div class="btn" style="position:absolute;left:708.5px;top:226px;width:52.0px;height:14.5px;"></div>
<div class="t" style='left:711.80px;top:229.34px;font:10px/10px "Liberation Sans", sans-serif;color:#262626;transform:scaleX(0.9602);'>Save As ...</div>
<div class="gb" style="position:absolute;left:630.5px;top:252px;width:146.0px;height:28.5px;"></div>
<div class="t" style='left:667.80px;top:257.62px;font:18.4px/18.4px "Liberation Sans", sans-serif;color:#0a0a0a;transform:scaleX(0.9747);-webkit-text-stroke:0.35px #0a0a0a;'>8046.3 Å</div>
<div class="gb" style="position:absolute;left:630.5px;top:288.5px;width:146.0px;height:212.0px;"></div>
<div class="" style="position:absolute;left:634px;top:285px;width:100px;height:10px;background:#ece9d8;"></div>
<div class="t" style='left:636.00px;top:284.72px;font:8.6px/8.6px "Liberation Sans", sans-serif;color:#2858c8;transform:scaleX(0.9701);-webkit-text-stroke:0.14px #2858c8;'>Single Spot Measurement</div>
<div class="btn" style="position:absolute;left:660.5px;top:302px;width:82.5px;height:24.5px;"></div>
<div class="t" style='left:681.60px;top:309.41px;font:bold 10.5px/10.5px "Liberation Sans", sans-serif;color:#262626;transform:scaleX(0.9388);'><span style="text-decoration:underline;text-underline-offset:1px;text-decoration-thickness:0.8px">M</span>easure</div>
<div class="btn" style="position:absolute;left:644px;top:335.5px;width:54px;height:17.5px;"></div>
<div class="t" style='left:650.40px;top:339.11px;font:bold 10.5px/10.5px "Liberation Sans", sans-serif;color:#262626;transform:scaleX(0.9354);'><span style="text-decoration:underline;text-underline-offset:1px;text-decoration-thickness:0.8px">B</span>aseline</div>
<div class="btn" style="position:absolute;left:708.5px;top:335.5px;width:53.5px;height:17.5px;"></div>
<div class="t" style='left:716.70px;top:339.11px;font:bold 10.5px/10.5px "Liberation Sans", sans-serif;color:#262626;transform:scaleX(0.9475);'>Analyze</div>
<div class="" style="position:absolute;left:642.3px;top:379.8px;width:121.10000000000002px;height:73.19999999999999px;background:#fff;box-sizing:border-box;border:solid #3e3c32;border-width:2px 1.4px 1.4px 2px;"></div>
<div class="t" style='left:645.30px;top:383.38px;font:9px/9px "Liberation Sans", sans-serif;color:#222;transform:scaleX(0.8985);-webkit-text-stroke:0.14px #222;'>SiO2=</div>
<div class="t" style='left:668.00px;top:383.55px;font:bold 8.9px/8.9px "Liberation Serif", serif;color:#111;transform:scaleX(1.0082);'>8046.3 Å</div>
<div class="t" style='left:645.30px;top:392.78px;font:9px/9px "Liberation Sans", sans-serif;color:#222;transform:scaleX(0.8963);-webkit-text-stroke:0.14px #222;'>Goodness of fit = 0.997557</div>
<div class="t" style='left:656.80px;top:456.62px;font:8.6px/8.6px "Liberation Sans", sans-serif;color:#222;transform:scaleX(0.9543);-webkit-text-stroke:0.14px #222;'>Measurement #:</div>
<div class="sunk" style="position:absolute;left:720px;top:455px;width:21px;height:11px;"></div>
<div class="t" style='left:723.20px;top:456.62px;font:8.6px/8.6px "Liberation Sans", sans-serif;color:#222;transform:scaleX(0.9199);-webkit-text-stroke:0.14px #222;'>33</div>
<div class="btn" style="position:absolute;left:672.5px;top:475px;width:62.5px;height:14.5px;"></div>
<div class="t" style='left:676.30px;top:477.82px;font:8.6px/8.6px "Liberation Sans", sans-serif;color:#262626;transform:scaleX(0.9364);-webkit-text-stroke:0.14px #262626;'>Show Statistics</div>
<div class="tb" style="position:absolute;left:11px;top:583.5px;width:562px;height:19.0px;"></div>
<div class="t" style='left:13.90px;top:585.43px;font:8.0px/8.0px "Liberation Sans", sans-serif;color:#111;transform:scaleX(0.8388);-webkit-text-stroke:0.14px #111;white-space:pre;'>Program Start (Ver. 2.8.0.9000, FMSolve Ver. 6.1.6, FMImage Ver. 2.2.8.0)  3/2/2011 4:48:21 PM</div>
<div class="btn" style="position:absolute;left:11.5px;top:605px;width:65.0px;height:28.5px;"></div>
<div class="t" style='left:23.60px;top:608.53px;font:10px/10px "Liberation Sans", sans-serif;color:#1a1a1a;transform:scaleX(0.9984);'>Cassette</div>
<div class="t" style='left:21.80px;top:620.83px;font:10px/10px "Liberation Sans", sans-serif;color:#1a1a1a;transform:scaleX(0.9973);'>Operation</div>
<div class="btn" style="position:absolute;left:81.5px;top:605px;width:64.5px;height:28.5px;"></div>
<div class="t" style='left:99.70px;top:608.53px;font:10px/10px "Liberation Sans", sans-serif;color:#1a1a1a;transform:scaleX(1.0495);'>Wafer</div>
<div class="t" style='left:91.90px;top:620.83px;font:10px/10px "Liberation Sans", sans-serif;color:#1a1a1a;transform:scaleX(0.9973);'>Operation</div>
<div class="btn" style="position:absolute;left:152px;top:605.5px;width:58.69999999999999px;height:27.899999999999977px;border-color:#9a8656;box-shadow:inset 0 0 0 1px #f6e0b4, inset 0 -2px 0 #e4ae62;"></div>
<div class="t" style='left:156.30px;top:614.58px;font:10.3px/10.3px "Liberation Sans", sans-serif;color:#262626;transform:scaleX(0.9492);'><span style="text-decoration:underline;text-underline-offset:1px;text-decoration-thickness:0.8px">E</span>dit Recipe</div>
<div class="btn" style="position:absolute;left:217px;top:605px;width:100.5px;height:28.5px;"></div>
<div class="t" style='left:232.00px;top:615.13px;font:10px/10px "Liberation Sans", sans-serif;color:#262626;transform:scaleX(1.0053);'>View WaferMap</div>
<div class="btn" style="position:absolute;left:323px;top:605px;width:77px;height:28.5px;"></div>
<div class="t" style='left:328.00px;top:615.13px;font:10px/10px "Liberation Sans", sans-serif;color:#262626;transform:scaleX(1.0062);'><span style="text-decoration:underline;text-underline-offset:1px;text-decoration-thickness:0.8px">V</span>iew Database</div>
<div class="" style="position:absolute;left:578px;top:584px;width:219px;height:49px;background:#fff;box-sizing:border-box;border-top:1px solid #6e6c60;border-left:1px solid #8a887a;"></div>
<div class="t" style='left:583.80px;top:596.88px;font:italic bold 22px/22px "Liberation Sans", sans-serif;color:#0a0a0a;transform:scaleX(1.0472);'>F60</div>
<div class="t" style='left:631.00px;top:607.20px;font:9.8px/9.8px "Liberation Sans", sans-serif;color:#222;transform:scaleX(0.9855);'>by</div>
<svg width="800" height="640" style="will-change:transform"><g fill="#2a62a6" stroke="#2a62a6"><text x="650.9" y="615.0" font-family="Liberation Sans, sans-serif" font-weight="bold" font-style="italic" font-size="17.4" textLength="139.6" lengthAdjust="spacingAndGlyphs" stroke-width="1.1" stroke-linejoin="miter">FILMETRICS</text><path d="M704.4 609 L709.2 609 L703.9 619.3 L698.6 619.3 Z" stroke="none"/></g><line x1="704.5" y1="618.2" x2="789" y2="618.2" stroke="#76849e" stroke-width="1.2" stroke-dasharray="1.7 2.3"/></svg>
<div class="" style="position:absolute;left:1.4px;top:635.6px;width:798.6px;height:2.699999999999932px;background:#f1efe5;"></div>
<div class="" style="position:absolute;left:0px;top:638.3px;width:800px;height:1.7000000000000455px;background:#fbfbf7;"></div>
<div class="" style="position:absolute;left:798px;top:16px;width:2px;height:624px;background:#f1efe4;"></div>
</body></html>
